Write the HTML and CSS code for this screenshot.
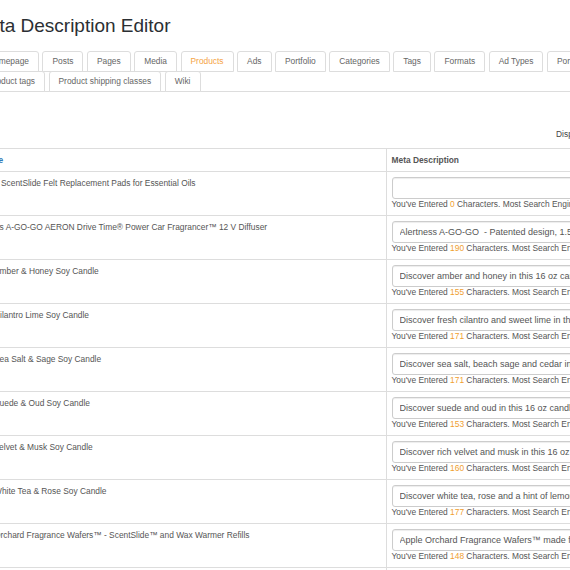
FILE: index.html
```html
<!DOCTYPE html>
<html lang="en">
<head>
    <meta charset="UTF-8">
    <meta name="viewport" content="width=device-width, initial-scale=1.0">
    <title>Meta Description Editor</title>
    <link rel="stylesheet" href="styles.css">
</head>
<body>

    <div class="wrap">
        <h1>Meta Description Editor</h1>

        <ul class="tabs">
            <li><a href="#">Homepage</a></li>
            <li><a href="#">Posts</a></li>
            <li><a href="#">Pages</a></li>
            <li><a href="#">Media</a></li>
            <li class="active"><a href="#">Products</a></li>
            <li><a href="#">Ads</a></li>
            <li><a href="#">Portfolio</a></li>
            <li><a href="#">Categories</a></li>
            <li><a href="#">Tags</a></li>
            <li><a href="#">Formats</a></li>
            <li><a href="#">Ad Types</a></li>
            <li><a href="#">Portfolio categories</a></li>
            <li><a href="#">Product categories</a></li>
            <li><a href="#">Product tags</a></li>
            <li><a href="#">Product shipping classes</a></li>
            <li><a href="#">Wiki</a></li>
        </ul>

        <div class="toolbar">
            <span>Displaying 1 - 20 of 146 products. Page 1 of 8</span>
        </div>

        <table class="meta-table">
            <colgroup>
                <col class="col-title">
                <col>
            </colgroup>
            <thead>
                <tr>
                    <th class="th-title"><a href="#">Title</a></th>
                    <th class="th-meta">Meta Description</th>
                </tr>
            </thead>
            <tbody>
                <tr>
                    <td class="cell-title">6 ScentSlide Felt Replacement Pads for Essential Oils</td>
                    <td class="cell-meta">
                        <input type="text" value="">
                        <div class="hint">You've Entered <span class="count">0</span> Characters. Most Search Engines Use Up To 160.</div>
                    </td>
                </tr>
                <tr>
                    <td class="cell-title">Es A-GO-GO AERON Drive Time® Power Car Fragrancer™ 12 V Diffuser</td>
                    <td class="cell-meta">
                        <input type="text" value="Alertness A-GO-GO  - Patented design, 1.5 oz of pure essential oil blend for the car">
                        <div class="hint">You've Entered <span class="count">190</span> Characters. Most Search Engines Use Up To 160.</div>
                    </td>
                </tr>
                <tr>
                    <td class="cell-title">Amber &amp; Honey Soy Candle</td>
                    <td class="cell-meta">
                        <input type="text" value="Discover amber and honey in this 16 oz candle hand poured with natural soy wax">
                        <div class="hint">You've Entered <span class="count">155</span> Characters. Most Search Engines Use Up To 160.</div>
                    </td>
                </tr>
                <tr>
                    <td class="cell-title">Cilantro Lime Soy Candle</td>
                    <td class="cell-meta">
                        <input type="text" value="Discover fresh cilantro and sweet lime in this 16 oz candle hand poured with soy wax">
                        <div class="hint">You've Entered <span class="count">171</span> Characters. Most Search Engines Use Up To 160.</div>
                    </td>
                </tr>
                <tr>
                    <td class="cell-title">Sea Salt &amp; Sage Soy Candle</td>
                    <td class="cell-meta">
                        <input type="text" value="Discover sea salt, beach sage and cedar in this 16 oz candle hand poured with soy wax">
                        <div class="hint">You've Entered <span class="count">171</span> Characters. Most Search Engines Use Up To 160.</div>
                    </td>
                </tr>
                <tr>
                    <td class="cell-title">Suede &amp; Oud Soy Candle</td>
                    <td class="cell-meta">
                        <input type="text" value="Discover suede and oud in this 16 oz candle hand poured with natural soy wax">
                        <div class="hint">You've Entered <span class="count">153</span> Characters. Most Search Engines Use Up To 160.</div>
                    </td>
                </tr>
                <tr>
                    <td class="cell-title">Velvet &amp; Musk Soy Candle</td>
                    <td class="cell-meta">
                        <input type="text" value="Discover rich velvet and musk in this 16 oz candle hand poured with natural soy wax">
                        <div class="hint">You've Entered <span class="count">160</span> Characters. Most Search Engines Use Up To 160.</div>
                    </td>
                </tr>
                <tr>
                    <td class="cell-title">White Tea &amp; Rose Soy Candle</td>
                    <td class="cell-meta">
                        <input type="text" value="Discover white tea, rose and a hint of lemon in this 16 oz candle hand poured with soy wax">
                        <div class="hint">You've Entered <span class="count">177</span> Characters. Most Search Engines Use Up To 160.</div>
                    </td>
                </tr>
                <tr>
                    <td class="cell-title">Orchard Fragrance Wafers™ - ScentSlide™ and Wax Warmer Refills</td>
                    <td class="cell-meta">
                        <input type="text" value="Apple Orchard Fragrance Wafers™ made for ScentSlide™ diffusers and wax warmers">
                        <div class="hint">You've Entered <span class="count">148</span> Characters. Most Search Engines Use Up To 160.</div>
                    </td>
                </tr>
                <tr>
                    <td class="cell-title">Lavender &amp; Vanilla Soy Candle</td>
                    <td class="cell-meta">
                        <input type="text" value="Discover lavender and vanilla in this 16 oz candle hand poured with natural soy wax">
                        <div class="hint">You've Entered <span class="count">158</span> Characters. Most Search Engines Use Up To 160.</div>
                    </td>
                </tr>
            </tbody>
        </table>
    </div>

</body>
</html>
```

FILE: styles.css
```css
body {
    font-family: "Liberation Sans", Arial, sans-serif;
    background-color: #fff;
    color: #555;
    margin: 0;
    padding: 0;
    overflow: hidden;
}

.wrap {
    width: 754px;
    margin-left: -14px;
    padding-top: 13px;
}

    .wrap h1 {
        margin: 0 0 0 -13px;
        font-size: 19px;
        line-height: 25px;
        font-weight: normal;
        color: #2b2f33;
    }

.tabs {
    display: flex;
    flex-wrap: wrap;
    list-style: none;
    margin: 13px 0 0 -8px;
    padding: 0;
    border-bottom: 1px solid #ddd;
}

    .tabs li {
        margin: 0 3.5px -1px 0;
    }

    .tabs a {
        display: block;
        padding: 0 9px;
        line-height: 19px;
        font-size: 8.4px;
        color: #666;
        text-decoration: none;
        border: 1px solid #ddd;
        border-radius: 3px 3px 0 0;
        background: #fff;
    }

    .tabs .active a {
        color: #f5a445;
    }

.toolbar {
    display: flex;
    justify-content: flex-end;
    margin: 36px 0 8px;
    padding-right: 14px;
    font-size: 8.4px;
    line-height: 12px;
    color: #444;
}

.meta-table {
    width: 100%;
    table-layout: fixed;
    border-collapse: collapse;
    font-size: 8.4px;
}

    .meta-table .col-title {
        width: 400px;
    }

    .meta-table th {
        text-align: left;
        font-weight: bold;
        color: #555;
        line-height: 12px;
        padding: 5px;
        border-top: 1px solid #ddd;
    }

        .meta-table th a {
            color: #337ab7;
            text-decoration: none;
        }

    .meta-table .th-title {
        padding-left: 0;
    }

    .meta-table .th-meta {
        border-left: 1px solid #ddd;
    }

    .meta-table td {
        vertical-align: top;
        border-top: 1px solid #ddd;
        line-height: 12px;
    }

.cell-title {
    padding: 5px 8px;
}

.cell-meta {
    padding: 5px;
    border-left: 1px solid #ddd;
}

    .cell-meta input {
        display: block;
        box-sizing: border-box;
        width: 100%;
        height: 22px;
        margin: 0;
        padding: 0 7px;
        font-family: "Liberation Sans", Arial, sans-serif;
        font-size: 9px;
        color: #555;
        border: 1px solid #ccc;
        border-radius: 3px;
        box-shadow: inset 0 1px 1px rgba(0, 0, 0, 0.075);
    }

    .cell-meta .hint {
        line-height: 11px;
        color: #555;
    }

.count {
    color: #f0a030;
}
```
